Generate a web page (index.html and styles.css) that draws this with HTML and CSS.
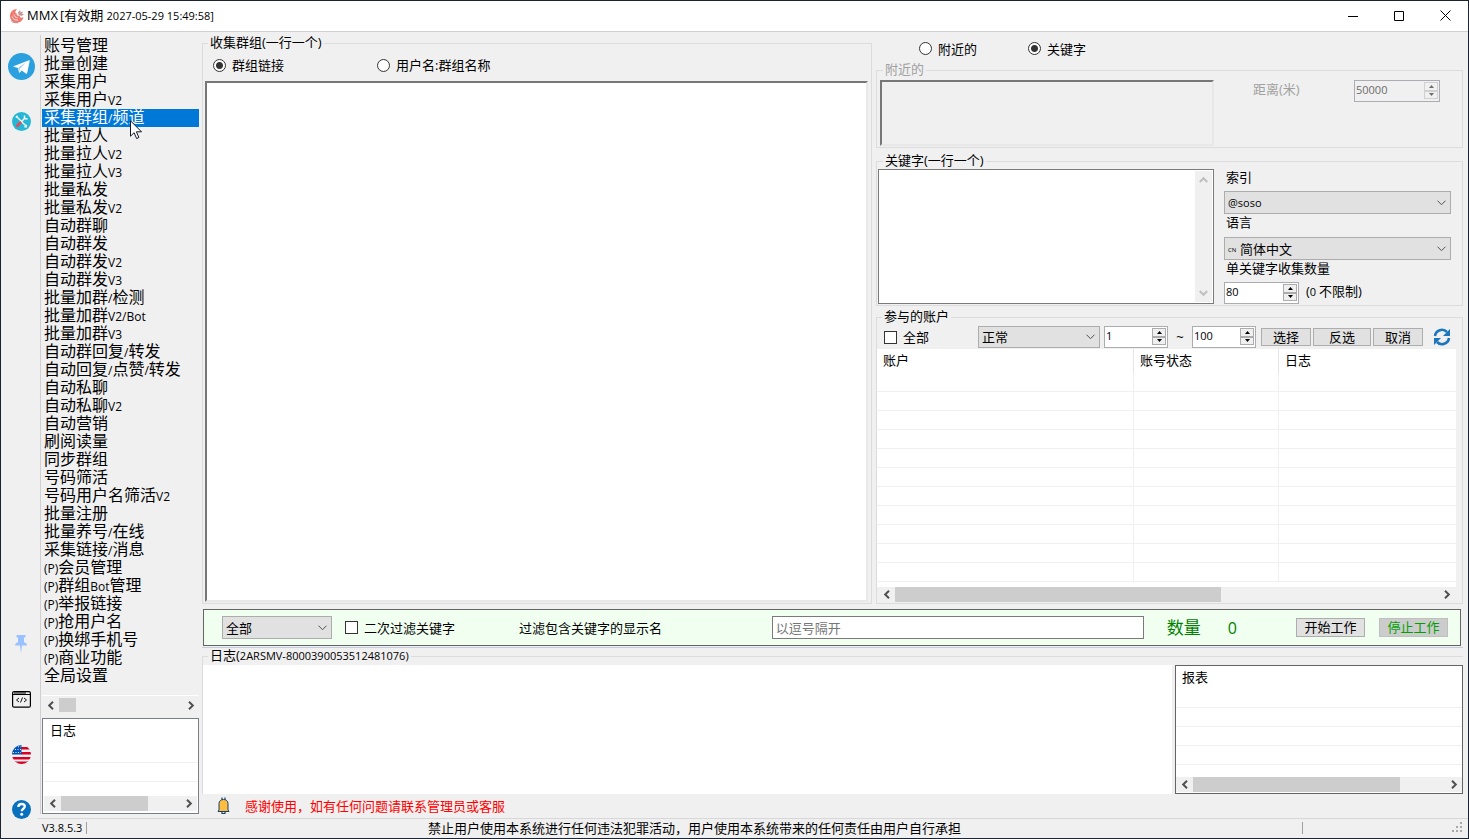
FILE: index.html
```html
<!DOCTYPE html>
<html lang="zh-CN">
<head>
<meta charset="utf-8">
<title>MMX</title>
<link rel="stylesheet" href="styles.css">
</head>
<body>
<svg class="defs" aria-hidden="true">
  <symbol id="left" viewBox="0 0 8 9"><path d="M6 .8 2.2 4.5 6 8.2" fill="none" stroke="currentColor" stroke-width="2"/></symbol>
  <symbol id="right" viewBox="0 0 8 9"><path d="M2 .8 5.8 4.5 2 8.2" fill="none" stroke="currentColor" stroke-width="2"/></symbol>
  <symbol id="up" viewBox="0 0 9 8"><path d="M.8 6 4.5 2.2 8.2 6" fill="none" stroke="currentColor" stroke-width="2"/></symbol>
  <symbol id="down" viewBox="0 0 9 8"><path d="M.8 2 4.5 5.8 8.2 2" fill="none" stroke="currentColor" stroke-width="2"/></symbol>
  <symbol id="tri-up" viewBox="0 0 5 3"><path d="M0 3 2.5 0 5 3z" fill="currentColor"/></symbol>
  <symbol id="tri-down" viewBox="0 0 5 3"><path d="M0 0 2.5 3 5 0z" fill="currentColor"/></symbol>
</svg>
<div class="window">
  <header class="titlebar">
    <svg class="logo" viewBox="0 0 16 16" aria-hidden="true">
      <path d="M8 1C4 1 1 4 1 8c0 4 3 6.500 7 6.500 3.500 0 6-2 6.300-5.500-2 1.500-4 .5-3.500-1.500-2 .8-4-.5-3-2.500C6 6 5.500 4 8 1z" fill="#f07a70"/>
      <path d="M9 4.500 11 2l.8 2.200L14 3.500l-.8 2.200 1.800.6-2.500 1.700L9.500 7z" fill="#c99a98"/>
      <path d="M3 8.500c1 2.500 3 4 6 3.500M5 6.500c.3 2 1.500 3 3.500 3.200" stroke="#fff" stroke-width=".8" fill="none"/>
      <path d="M2 12.500c1.500 2 4 2.500 7 2.200" stroke="#b98a8a" fill="none"/>
    </svg>
    <h1 class="title"><span>MMX</span><span>[有效期 <small>2027-05-29 15:49:58]</small></span></h1>
    <div class="window-buttons">
      <button type="button" aria-label="最小化"><svg width="10" height="10" viewBox="0 0 10 10"><path d="M0 5.500h10" stroke="#000"/></svg></button>
      <button type="button" aria-label="最大化"><svg width="10" height="10" viewBox="0 0 10 10"><path d="M.5.5h9v9h-9z" fill="none" stroke="#000"/></svg></button>
      <button type="button" aria-label="关闭"><svg width="11" height="11" viewBox="0 0 11 11"><path d="m.5.5 10 10m0-10-10 10" stroke="#000"/></svg></button>
    </div>
  </header>
  <div class="body">
    <aside class="rail">
      <button type="button" aria-label="Telegram"><svg width="27" height="27" viewBox="0 0 27 27"><circle cx="13.500" cy="13.500" r="13.500" fill="#2aa1de"/><path d="M5.500 13.300 21 7.200c.5-.2.9.1.7.8l-2.500 12c-.2.8-.7 1-1.400.6l-4-3-2 1.900c-.5.4-.8.2-.9-.3l-.9-4.100-4.300-1.300c-.6-.1-.6-.3-.2-.5z" fill="#fff"/><path d="m10.200 14.800 7.800-5.300-6.300 6.500-.2 3z" fill="#9fd0ec"/></svg></button>
      <button type="button" aria-label="工具"><svg width="19" height="19" viewBox="0 0 19 19"><circle cx="9.500" cy="9.500" r="9.500" fill="#25b7d3"/><path d="m5 5 9 9" stroke="#fff" stroke-width="1.300"/><path d="M3.800 5.500 5.500 3.800M14.300 12.800v2h-2" fill="none" stroke="#fff" stroke-width="1.300"/><path d="M9 10 13 6" stroke="#fff" stroke-width="1.500"/><path d="M12.500 3.500V6l1 .8h2" stroke="#fff" stroke-width="1.500" fill="none"/><path d="m5.300 13.700 3-3" stroke="#e04f5f" stroke-width="2.800" stroke-linecap="round"/></svg></button>
      <button type="button" class="rail-lower" aria-label="置顶"><svg width="19" height="22" viewBox="0 0 19 22"><path d="M4.500 1h9v2l-1.500.7v4.600c2 .5 3 1.700 3 3.200h-5L9 19l-1-7.500H3c0-1.500 1-2.700 3-3.200V3.700L4.500 3z" fill="#99c2ff"/></svg></button>
      <button type="button" aria-label="控制台"><svg width="19" height="17" viewBox="0 0 19 17"><rect x=".6" y=".6" width="17.800" height="15.600" rx="1.500" fill="none" stroke="#000" stroke-width="1.200"/><path d="M1 3.500h17" stroke="#000"/><path d="M2 2h12" stroke="#000"/><path d="M7 7 4.500 9 7 11m5-4 2.500 2-2.500 2M10.500 6.500l-2 5" fill="none" stroke="#000" stroke-width=".9"/></svg></button>
      <button type="button" aria-label="English"><svg width="19" height="19" viewBox="0 0 19 19"><clipPath id="round"><circle cx="9.500" cy="9.500" r="9.500"/></clipPath><g clip-path="url(#round)"><path d="M0 0h19v19H0z" fill="#f0f0f0"/><path d="M9 2h10v2.400H9zM9 7h10v2.400H9zM0 12h19v2.400H0zM0 16.600h19V19H0z" fill="#d80027"/><path d="M0 0h9.500v9.500H0z" fill="#0052b4"/><path d="M1 7.500h8M3 4.500h6M6 1.800h3" stroke="#f0f0f0" stroke-dasharray="1 1.500"/></g></svg></button>
      <button type="button" aria-label="帮助"><svg width="19" height="19" viewBox="0 0 19 19"><circle cx="9.500" cy="9.500" r="9.500" fill="#0870bd"/><path d="M6.300 7c.1-2 1.500-3 3.300-3s3.200 1 3.200 2.600c0 2.200-3.100 2.200-3.100 4.700" fill="none" stroke="#fff" stroke-width="2.300"/><circle cx="9.700" cy="14.300" r="1.500" fill="#fff"/></svg></button>
    </aside>
    <div class="workspace">
      <div class="content">
        <nav class="sidebar" aria-label="功能">
          <ul class="menu">
            <li><button type="button">账号管理</button></li>
            <li><button type="button">批量创建</button></li>
            <li><button type="button">采集用户</button></li>
            <li><button type="button">采集用户<small>V2</small></button></li>
            <li class="selected"><button type="button" aria-current="page">采集群组<small>/</small>频道</button>
              <svg class="pointer" width="13" height="20" viewBox="0 0 13 20" aria-hidden="true"><path d="M.5.8v15.400l3.600-3.500 2.500 5.800 2.300-1-2.500-5.700h5.100z" fill="#fff" stroke="#111827"/></svg></li>
            <li><button type="button">批量拉人</button></li>
            <li><button type="button">批量拉人<small>V2</small></button></li>
            <li><button type="button">批量拉人<small>V3</small></button></li>
            <li><button type="button">批量私发</button></li>
            <li><button type="button">批量私发<small>V2</small></button></li>
            <li><button type="button">自动群聊</button></li>
            <li><button type="button">自动群发</button></li>
            <li><button type="button">自动群发<small>V2</small></button></li>
            <li><button type="button">自动群发<small>V3</small></button></li>
            <li><button type="button">批量加群<small>/</small>检测</button></li>
            <li><button type="button">批量加群<small>V2/Bot</small></button></li>
            <li><button type="button">批量加群<small>V3</small></button></li>
            <li><button type="button">自动群回复<small>/</small>转发</button></li>
            <li><button type="button">自动回复<small>/</small>点赞<small>/</small>转发</button></li>
            <li><button type="button">自动私聊</button></li>
            <li><button type="button">自动私聊<small>V2</small></button></li>
            <li><button type="button">自动营销</button></li>
            <li><button type="button">刷阅读量</button></li>
            <li><button type="button">同步群组</button></li>
            <li><button type="button">号码筛活</button></li>
            <li><button type="button">号码用户名筛活<small>V2</small></button></li>
            <li><button type="button">批量注册</button></li>
            <li><button type="button">批量养号<small>/</small>在线</button></li>
            <li><button type="button">采集链接<small>/</small>消息</button></li>
            <li><button type="button"><small>(P)</small>会员管理</button></li>
            <li><button type="button"><small>(P)</small>群组<small>Bot</small>管理</button></li>
            <li><button type="button"><small>(P)</small>举报链接</button></li>
            <li><button type="button"><small>(P)</small>抢用户名</button></li>
            <li><button type="button"><small>(P)</small>换绑手机号</button></li>
            <li><button type="button"><small>(P)</small>商业功能</button></li>
            <li><button type="button">全局设置</button></li>
          </ul>
          <div class="hscroll menu-scroll">
            <button type="button" aria-label="向左"><svg width="8" height="9"><use href="#left"/></svg></button>
            <div class="track"><div class="thumb" style="width:14%"></div></div>
            <button type="button" aria-label="向右"><svg width="8" height="9"><use href="#right"/></svg></button>
          </div>
          <section class="list side-log">
            <h2>日志</h2>
            <div class="lines"></div>
            <div class="hscroll">
              <button type="button" aria-label="向左"><svg width="8" height="9"><use href="#left"/></svg></button>
              <div class="track"><div class="thumb" style="width:73%"></div></div>
              <button type="button" aria-label="向右"><svg width="8" height="9"><use href="#right"/></svg></button>
            </div>
          </section>
        </nav>
        <main class="main">
          <div class="panels">
            <fieldset class="group collect">
              <legend>收集群组(一行一个)</legend>
              <div class="radios">
                <label><input type="radio" name="format" checked>群组链接</label>
                <label><input type="radio" name="format">用户名:群组名称</label>
              </div>
              <textarea class="sunken" aria-label="收集群组"></textarea>
            </fieldset>
            <div class="options">
              <div class="radios mode">
                <label><input type="radio" name="mode">附近的</label>
                <label><input type="radio" name="mode" checked>关键字</label>
              </div>
              <fieldset class="group nearby" disabled>
                <legend>附近的</legend>
                <textarea class="sunken" aria-label="附近的"></textarea>
                <label for="distance">距离(米)</label>
                <div class="spinner wide">
                  <input id="distance" type="text" value="50000">
                  <div class="steps"><button type="button" aria-label="增加"><svg width="5" height="3"><use href="#tri-up"/></svg></button><button type="button" aria-label="减少"><svg width="5" height="3"><use href="#tri-down"/></svg></button></div>
                </div>
              </fieldset>
              <fieldset class="group keywords">
                <legend>关键字(一行一个)</legend>
                <div class="keyword-box">
                  <textarea aria-label="关键字"></textarea>
                  <div class="vscroll">
                    <button type="button" aria-label="向上"><svg width="9" height="8"><use href="#up"/></svg></button>
                    <button type="button" aria-label="向下"><svg width="9" height="8"><use href="#down"/></svg></button>
                  </div>
                </div>
                <div class="settings">
                  <label for="index">索引</label>
                  <select id="index" class="latin"><option>@soso</option></select>
                  <label for="language">语言</label>
                  <div class="language"><span>CN</span><select id="language"><option>简体中文</option></select></div>
                  <label for="amount">单关键字收集数量</label>
                  <div class="amount">
                    <div class="spinner medium">
                      <input id="amount" type="text" value="80">
                      <div class="steps"><button type="button" aria-label="增加"><svg width="5" height="3"><use href="#tri-up"/></svg></button><button type="button" aria-label="减少"><svg width="5" height="3"><use href="#tri-down"/></svg></button></div>
                    </div>
                    <span>(<small>0 </small>不限制)</span>
                  </div>
                </div>
              </fieldset>
              <fieldset class="group accounts">
                <legend>参与的账户</legend>
                <div class="toolbar">
                  <label class="all"><input type="checkbox">全部</label>
                  <select class="state" aria-label="状态"><option>正常</option></select>
                  <div class="spinner">
                    <input type="text" value="1" aria-label="起始">
                    <div class="steps"><button type="button" aria-label="增加"><svg width="5" height="3"><use href="#tri-up"/></svg></button><button type="button" aria-label="减少"><svg width="5" height="3"><use href="#tri-down"/></svg></button></div>
                  </div>
                  <span class="tilde">~</span>
                  <div class="spinner">
                    <input type="text" value="100" aria-label="结束">
                    <div class="steps"><button type="button" aria-label="增加"><svg width="5" height="3"><use href="#tri-up"/></svg></button><button type="button" aria-label="减少"><svg width="5" height="3"><use href="#tri-down"/></svg></button></div>
                  </div>
                  <div class="picks">
                    <button type="button" class="push">选择</button>
                    <button type="button" class="push invert">反选</button>
                    <button type="button" class="push">取消</button>
                  </div>
                  <button type="button" class="refresh" aria-label="刷新"><svg width="18" height="18" viewBox="0 0 18 18"><path d="M2 8a7 7 0 0 1 12-4" fill="none" stroke="#1b76bd" stroke-width="2.600"/><path d="M17 1v7h-7z" fill="#1b76bd"/><path d="M16 10a7 7 0 0 1-12 4" fill="none" stroke="#1b76bd" stroke-width="2.600"/><path d="M1 17v-7h7z" fill="#1b76bd"/></svg></button>
                </div>
                <div class="table-area">
                  <table>
                    <colgroup><col class="col-account"><col class="col-state"><col></colgroup>
                    <thead><tr><th scope="col">账户</th><th scope="col">账号状态</th><th scope="col">日志</th></tr></thead>
                    <tbody>
                      <tr><td></td><td></td><td></td></tr>
                      <tr><td></td><td></td><td></td></tr>
                      <tr><td></td><td></td><td></td></tr>
                      <tr><td></td><td></td><td></td></tr>
                      <tr><td></td><td></td><td></td></tr>
                      <tr><td></td><td></td><td></td></tr>
                      <tr><td></td><td></td><td></td></tr>
                      <tr><td></td><td></td><td></td></tr>
                      <tr><td></td><td></td><td></td></tr>
                      <tr><td></td><td></td><td></td></tr>
                      <tr><td></td><td></td><td></td></tr>
                    </tbody>
                  </table>
                </div>
                <div class="hscroll accounts-scroll">
                  <button type="button" aria-label="向左"><svg width="8" height="9"><use href="#left"/></svg></button>
                  <div class="track"><div class="thumb" style="width:60%"></div></div>
                  <button type="button" aria-label="向右"><svg width="8" height="9"><use href="#right"/></svg></button>
                </div>
              </fieldset>
            </div>
          </div>
          <section class="actions">
            <select class="scope" aria-label="范围"><option>全部</option></select>
            <label class="refilter"><input type="checkbox">二次过滤关键字</label>
            <label class="filter-label" for="filter">过滤包含关键字的显示名</label>
            <input id="filter" class="filter" type="text" placeholder="以逗号隔开">
            <span class="count">数量</span><output class="count total">0</output>
            <button type="button" class="push start">开始工作</button>
            <button type="button" class="push stop" disabled>停止工作</button>
          </section>
          <div class="lower">
            <fieldset class="group log">
              <legend>日志(<small>2ARSMV-8000390053512481076)</small></legend>
              <div class="log-body">
                <div class="log-output"></div>
                <section class="list report">
                  <h2>报表</h2>
                  <div class="lines"></div>
                  <div class="hscroll">
                    <button type="button" aria-label="向左"><svg width="8" height="9"><use href="#left"/></svg></button>
                    <div class="track"><div class="thumb" style="width:82%"></div></div>
                    <button type="button" aria-label="向右"><svg width="8" height="9"><use href="#right"/></svg></button>
                  </div>
                </section>
              </div>
            </fieldset>
          </div>
          <p class="notice"><svg width="13" height="17" viewBox="0 0 13 17" aria-hidden="true"><path d="M5 3V.5M8 3V.5M5 14v2.500h3V14" fill="none" stroke="#17406d" stroke-width="1.200"/><path d="M2 13V6.500C2 4 4 2.500 6.500 2.500S11 4 11 6.500V13l1 1.500H1z" fill="#fdbd40" stroke="#17406d" stroke-width="1"/></svg>感谢使用，如有任何问题请联系管理员或客服</p>
        </main>
      </div>
      <footer class="statusbar">
        <small class="version">V3.8.5.3</small>
        <span class="terms">禁止用户使用本系统进行任何违法犯罪活动，用户使用本系统带来的任何责任由用户自行承担</span>
        <span class="corner"><svg width="11" height="11" viewBox="0 0 11 11" aria-hidden="true"><path d="M8 0h2v2H8zM4 4h2v2H4zM8 4h2v2H8zM0 8h2v2H0zM4 8h2v2H4zM8 8h2v2H8z" fill="#a8a8a8"/></svg></span>
      </footer>
    </div>
  </div>
</div>
</body>
</html>
```
FILE: styles.css
```css
* { box-sizing: border-box; }

body {
  margin: 0;
  background: #f0f0f0;
  color: #000;
  font: 13px/16px "Open Sans", "Noto Sans CJK SC", sans-serif;
}

button, input, select, textarea { font: inherit; color: inherit; margin: 0; }
button { padding: 0; border: 0; background: none; }
small { font-size: 11px; }
h1, h2, p, ul { margin: 0; padding: 0; font-size: 13px; font-weight: 400; }
ul { list-style: none; }
svg { display: block; flex: none; }
.defs { position: absolute; width: 0; height: 0; }

.window {
  display: flex;
  flex-direction: column;
  min-height: 100vh;
  border: 1px solid #1b2433;
}

.titlebar {
  display: flex;
  align-items: center;
  height: 31px;
  padding: 0 0 1px 8px;
  background: #fff;
  border-bottom: 1px solid #d0d0d0;
}
.logo { width: 16px; height: 16px; }
.title { display: flex; flex: 1; gap: 2px; margin-left: 2px; }
.window-buttons { display: flex; }
.window-buttons button {
  display: flex;
  align-items: center;
  justify-content: center;
  width: 46px;
  height: 29px;
}

.body { display: flex; flex: 1; }
.rail {
  display: flex;
  flex-direction: column;
  width: 37px;
  padding: 7px 0 1px;
}
.rail button {
  display: flex;
  align-items: center;
  justify-content: center;
  width: 40px;
  height: 55px;
}
.rail .rail-lower { margin-top: auto; }

.workspace { display: flex; flex: 1; flex-direction: column; min-width: 0; }
.content { display: flex; flex: 1; padding: 3px 5px 0 2px; }

.sidebar {
  display: flex;
  flex-direction: column;
  width: 159px;
  margin-bottom: 4px;
  padding: 2px 0 0 1px;
  border-left: 1px solid #d0d0d0;
}
.menu { flex: 1; }
.menu li { position: relative; height: 18px; }
.menu button {
  display: block;
  width: 100%;
  padding-left: 2px;
  font-size: 16px;
  line-height: 16px;
  text-align: left;
  white-space: nowrap;
}
.menu small { font-size: 12px; }
.menu .selected { background: #0078d7; color: #fff; }
.pointer { position: absolute; left: 88px; top: 11px; z-index: 1; }

.hscroll {
  display: flex;
  align-items: stretch;
  height: 15px;
  background: #f0f0f0;
  color: #505050;
}
.hscroll button {
  display: flex;
  align-items: center;
  justify-content: center;
  width: 17px;
}
.track { display: flex; flex: 1; }
.thumb { background: #cdcdcd; }
.menu-scroll { height: 18px; padding: 2px 0 1px; border-top: 1px solid #fff; }

.list {
  display: flex;
  flex-direction: column;
  background: #fff;
  border: 1px solid #7a7f87;
}
.list h2 { padding: 4px 6px; line-height: 15px; }
.lines {
  flex: 1;
  background: repeating-linear-gradient(#fff 0 18px, #f0f0f0 18px 19px);
}
.side-log { height: 96px; margin-top: 5px; padding: 0 1px 2px; }
.side-log h2 { padding-bottom: 6px; }

.main {
  display: flex;
  flex: 1;
  flex-direction: column;
  min-width: 0;
  margin-left: 3px;
}
.panels {
  display: grid;
  flex: 1;
  grid-template-columns: minmax(0, 1fr) 587px;
  gap: 4px;
}

.group {
  min-width: 0;
  margin: 0;
  padding: 0;
  border: 1px solid #dcdcdc;
}
legend { height: 16px; margin-left: 5px; padding: 0 2px; line-height: 15px; }

.radios { display: flex; align-items: center; gap: 93px; padding-left: 8px; }
.radios label, .all, .refilter { display: flex; align-items: center; gap: 6px; }

input[type="radio"], input[type="checkbox"] {
  appearance: none;
  width: 13px;
  height: 13px;
  background: #fff;
  border: 1px solid #333;
}
input[type="radio"] { border-radius: 50%; }
input[type="radio"]:checked { background: radial-gradient(circle, #333 3px, #fff 4px); }

textarea {
  display: block;
  padding: 2px;
  border: 0;
  background: #fff;
  resize: none;
}
.sunken {
  border: 2px solid;
  border-color: #777 #e8e8e8 #e8e8e8 #777;
}
.collect { display: flex; flex-direction: column; padding: 0 3px 1px 2px; }
.collect .radios { height: 28px; margin-bottom: 2px; }
.collect textarea { flex: 1; }
.collect legend, .nearby legend { margin-left: 3px; }

.options { display: flex; flex-direction: column; min-width: 0; }
.mode { gap: 51px; height: 27px; padding-left: 43px; }

.nearby {
  display: flex;
  align-items: flex-start;
  height: 86px;
  padding: 2px 22px 0 3px;
  color: #a0a0a0;
}
.nearby textarea { width: 334px; height: 66px; background: #f0f0f0; }
.nearby label { flex: 1; margin-top: 1px; padding-left: 39px; }

.spinner {
  display: flex;
  width: 64px;
  height: 22px;
  background: #fff;
  border: 1px solid #abadb3;
}
.spinner input {
  flex: 1;
  width: 0;
  height: 17px;
  padding: 0 1px;
  border: 0;
  background: none;
  font-size: 11px;
}
.steps { display: flex; flex-direction: column; width: 15px; padding: 1px 1px 2px 0; }
.steps button {
  display: flex;
  flex: 1;
  align-items: center;
  justify-content: center;
  background: #f0f0f0;
  border: 1px solid #acacac;
}
.wide { width: 86px; }
.medium { width: 75px; }
.nearby .spinner { background: #f0f0f0; color: #6d6d6d; }
.nearby .steps button { border-color: #d0d0d0; }

.keywords {
  display: flex;
  gap: 10px;
  margin-top: 5px;
  padding: 0 11px 1px 1px;
}
.keyword-box {
  display: flex;
  width: 336px;
  height: 135px;
  padding: 1px;
  background: #fff;
  border: 1px solid #7a7a7a;
}
.keyword-box textarea { flex: 1; min-width: 0; }
.vscroll {
  display: flex;
  flex-direction: column;
  justify-content: space-between;
  align-items: center;
  width: 17px;
  padding: 5px 0;
  background: #f0f0f0;
  color: #bfbfbf;
}
.settings {
  display: grid;
  flex: 1;
  grid-template-rows: 22px 23px 23px 23px 22px 22px;
}
.settings label { padding-left: 2px; line-height: 17px; }

select {
  appearance: none;
  width: 100%;
  height: 23px;
  padding: 0 20px 0 3px;
  border: 1px solid #acacac;
  border-radius: 0;
  background: #e1e1e1 url("data:image/svg+xml,%3Csvg xmlns='http://www.w3.org/2000/svg' width='9' height='6'%3E%3Cpath d='M.5.7l4 4 4-4' fill='none' stroke='%23505050'/%3E%3C/svg%3E") no-repeat right 4px center;
}
.latin { font-size: 11px; }
.language { position: relative; }
.language span { position: absolute; left: 4px; top: 5px; font-size: 6px; }
.language select { padding-left: 15px; }
.amount { display: flex; gap: 7px; }
.amount span { line-height: 18px; }

.accounts { display: flex; flex: 1; flex-direction: column; margin-top: 3px; }
.toolbar {
  display: flex;
  align-items: center;
  height: 24px;
  padding: 0 12px 0 7px;
}
.state { width: 122px; height: 22px; margin: 0 4px 0 auto; }
.tilde { width: 24px; text-align: center; }
.picks { display: flex; gap: 2px; margin: 0 10px 0 5px; }
.push {
  width: 50px;
  height: 18px;
  padding-bottom: 1px;
  background: #e1e1e1;
  border: 1px solid #adadad;
  line-height: 14px;
}
.invert { width: 58px; }
.refresh { width: 17px; }

.table-area { flex: 1; margin-right: 6px; background: #fff; }
table { width: 100%; border-collapse: separate; border-spacing: 0; table-layout: fixed; }
.col-account { width: 257px; }
.col-state { width: 145px; }
th {
  height: 24px;
  padding: 0 6px 2px;
  border-right: 1px solid #e5e5e5;
  font-weight: 400;
  text-align: left;
}
td { height: 19px; padding: 0; border: solid #f0f0f0; border-width: 0 1px 1px 0; }
th:last-child, td:last-child { border-right: 0; }
.accounts-scroll { margin: 0 7px 1px 1px; }

.actions {
  display: flex;
  align-items: center;
  height: 37px;
  margin: 5px 2px 1px 1px;
  padding: 0 12px 0 18px;
  background: #f0fff0;
  border: 1px solid #646464;
  white-space: nowrap;
}
.scope { width: 110px; margin-right: 13px; }
.filter-label { margin: 0 auto 0 64px; }
.filter {
  flex: 0 1 372px;
  min-width: 80px;
  height: 23px;
  padding: 0 3px;
  border: 1px solid #7a7a7a;
  background: #fff;
}
.filter::placeholder { color: #757575; opacity: 1; }
.count { margin-left: 23px; color: #008000; font-size: 17px; }
.total { margin: 0 59px 0 27px; font-size: 16px; }
.start, .stop { width: 69px; height: 19px; }
.start { margin-right: 14px; }
.stop { background: #ccc; border-color: #bfbfbf; color: #00a000; }

.lower { border-top: 1px solid #c3cee0; }
.log { border-width: 1px 0 0 1px; }
.log-body { display: flex; gap: 3px; height: 130px; padding-top: 1px; }
.log-output { flex: 1; background: #fff; }
.report { width: 288px; padding-bottom: 1px; border-color: #646464; }

.notice {
  display: flex;
  align-items: center;
  gap: 15px;
  height: 23px;
  margin-bottom: 1px;
  padding-left: 15px;
  color: #f00;
}

.statusbar {
  display: flex;
  align-items: center;
  height: 20px;
  padding-bottom: 1px;
  border-top: 1px solid #d7d7d7;
}
.version { width: 49px; padding-left: 4px; border-right: 1px solid #a0a0a0; line-height: 12px; }
.terms { flex: 1; text-align: center; }
.corner {
  display: flex;
  justify-content: flex-end;
  width: 166px;
  height: 12px;
  padding-right: 5px;
  border-left: 1px solid #a0a0a0;
}
```
